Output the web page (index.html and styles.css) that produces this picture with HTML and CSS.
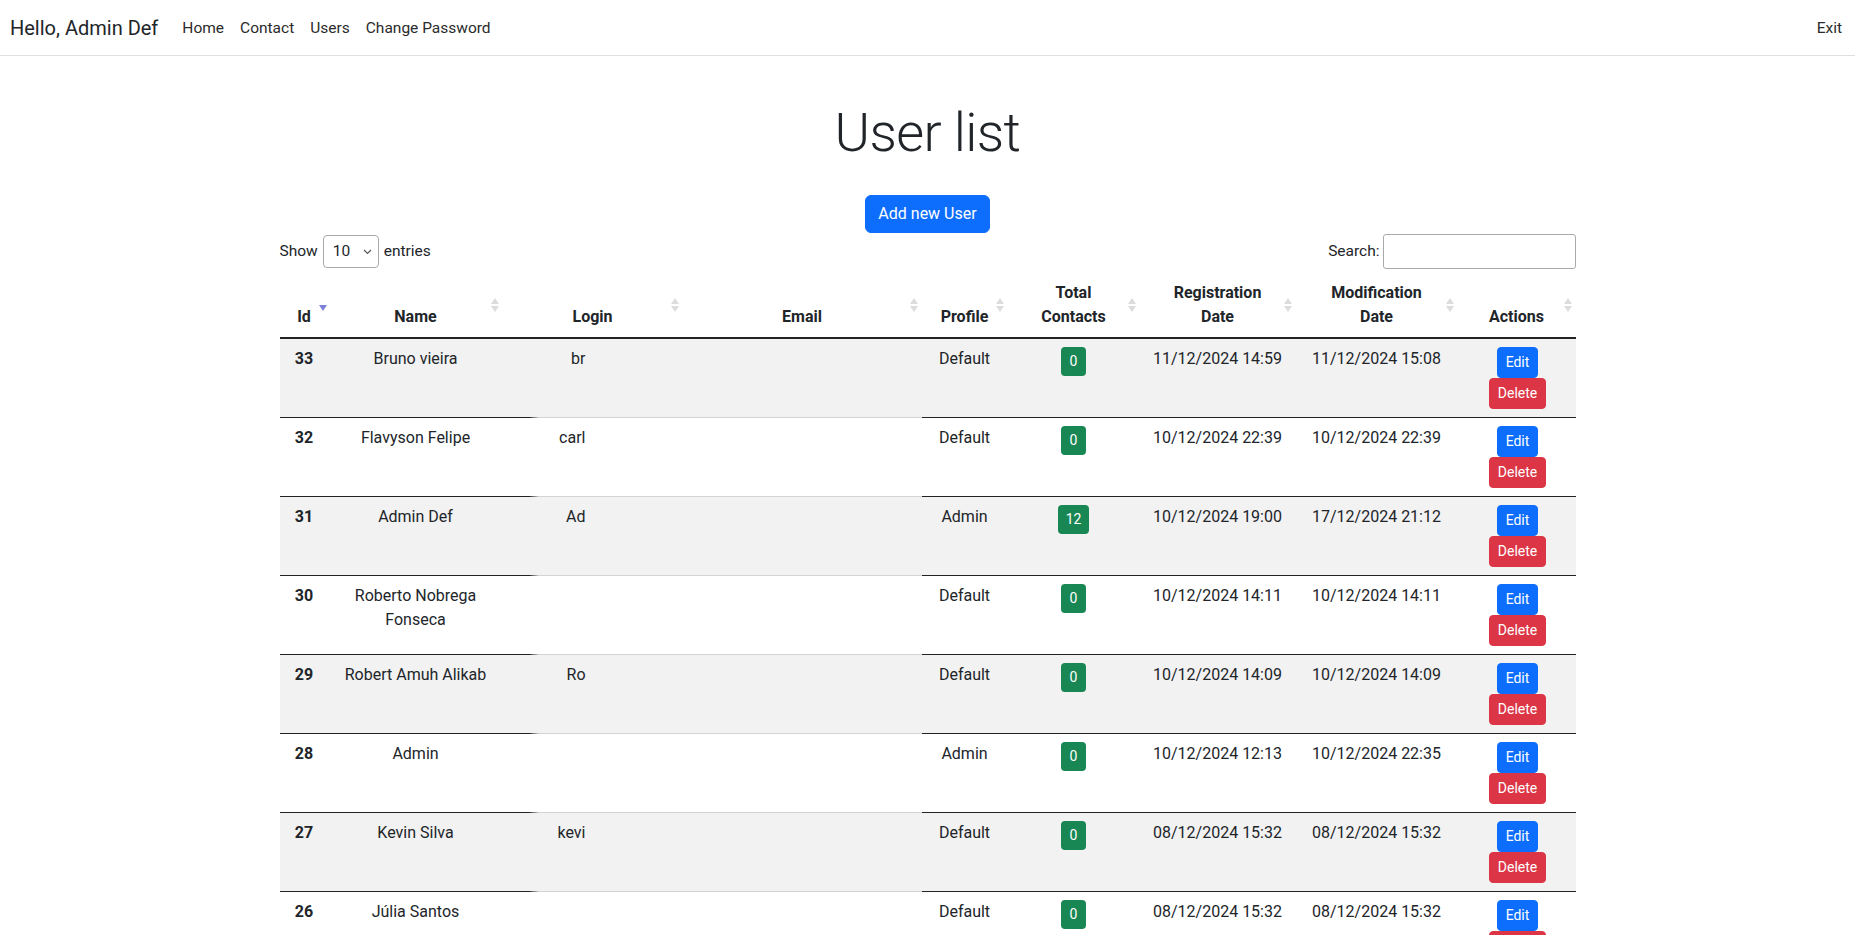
FILE: index.html
```html
<!DOCTYPE html>
<html lang="en">
<head>
<meta charset="utf-8">
<title>User list</title>
<link rel="stylesheet" href="styles.css">
</head>
<body>
<nav class="navbar">
  <div class="nav-left">
    <a class="brand" href="#">Hello, Admin Def</a>
    <ul class="nav-links">
      <li><a class="nav-link" href="#">Home</a></li>
      <li><a class="nav-link" href="#">Contact</a></li>
      <li><a class="nav-link" href="#">Users</a></li>
      <li><a class="nav-link" href="#">Change Password</a></li>
    </ul>
  </div>
  <a class="nav-link" href="#">Exit</a>
</nav>

<main class="container">
  <h1 class="title">User list</h1>
  <div class="add-wrap"><a class="btn btn-primary" href="#">Add new User</a></div>

  <div class="dt-top">
    <div class="dt-length">Show
      <span class="fake-select">10
        <svg class="chev" width="9" height="6" viewBox="0 0 9 6"><path d="M1 1 L4.5 4.5 L8 1" fill="none" stroke="#555" stroke-width="1.2"/></svg>
      </span>
      entries</div>
    <div class="dt-search">Search:<span class="fake-input"></span></div>
  </div>

  <table class="users">
    <colgroup>
      <col class="c-id"><col class="c-name"><col class="c-login"><col class="c-email"><col class="c-profile"><col class="c-total"><col class="c-reg"><col class="c-mod"><col class="c-actions">
    </colgroup>
    <thead>
      <tr>
        <th class="sort-desc">Id</th>
        <th class="sort">Name</th>
        <th class="sort">Login</th>
        <th class="sort">Email</th>
        <th class="sort">Profile</th>
        <th class="sort">Total<br>Contacts</th>
        <th class="sort">Registration<br>Date</th>
        <th class="sort">Modification<br>Date</th>
        <th class="sort">Actions</th>
      </tr>
    </thead>
    <tbody>
      <tr class="odd">
        <td class="id">33</td><td>Bruno vieira</td><td class="login">br</td><td class="email"></td><td>Default</td>
        <td><span class="count">0</span></td><td>11/12/2024 14:59</td><td>11/12/2024 15:08</td>
        <td><div class="actions"><a class="btn-sm btn-edit" href="#">Edit</a><a class="btn-sm btn-del" href="#">Delete</a></div></td>
      </tr>
      <tr>
        <td class="id">32</td><td>Flavyson Felipe</td><td class="login">carl</td><td class="email"></td><td>Default</td>
        <td><span class="count">0</span></td><td>10/12/2024 22:39</td><td>10/12/2024 22:39</td>
        <td><div class="actions"><a class="btn-sm btn-edit" href="#">Edit</a><a class="btn-sm btn-del" href="#">Delete</a></div></td>
      </tr>
      <tr class="odd">
        <td class="id">31</td><td>Admin Def</td><td class="login">Ad</td><td class="email"></td><td>Admin</td>
        <td><span class="count">12</span></td><td>10/12/2024 19:00</td><td>17/12/2024 21:12</td>
        <td><div class="actions"><a class="btn-sm btn-edit" href="#">Edit</a><a class="btn-sm btn-del" href="#">Delete</a></div></td>
      </tr>
      <tr>
        <td class="id">30</td><td>Roberto Nobrega<br>Fonseca</td><td class="login"></td><td class="email"></td><td>Default</td>
        <td><span class="count">0</span></td><td>10/12/2024 14:11</td><td>10/12/2024 14:11</td>
        <td><div class="actions"><a class="btn-sm btn-edit" href="#">Edit</a><a class="btn-sm btn-del" href="#">Delete</a></div></td>
      </tr>
      <tr class="odd">
        <td class="id">29</td><td>Robert Amuh Alikab</td><td class="login">Ro</td><td class="email"></td><td>Default</td>
        <td><span class="count">0</span></td><td>10/12/2024 14:09</td><td>10/12/2024 14:09</td>
        <td><div class="actions"><a class="btn-sm btn-edit" href="#">Edit</a><a class="btn-sm btn-del" href="#">Delete</a></div></td>
      </tr>
      <tr>
        <td class="id">28</td><td>Admin</td><td class="login"></td><td class="email"></td><td>Admin</td>
        <td><span class="count">0</span></td><td>10/12/2024 12:13</td><td>10/12/2024 22:35</td>
        <td><div class="actions"><a class="btn-sm btn-edit" href="#">Edit</a><a class="btn-sm btn-del" href="#">Delete</a></div></td>
      </tr>
      <tr class="odd">
        <td class="id">27</td><td>Kevin Silva</td><td class="login">kevi</td><td class="email"></td><td>Default</td>
        <td><span class="count">0</span></td><td>08/12/2024 15:32</td><td>08/12/2024 15:32</td>
        <td><div class="actions"><a class="btn-sm btn-edit" href="#">Edit</a><a class="btn-sm btn-del" href="#">Delete</a></div></td>
      </tr>
      <tr>
        <td class="id">26</td><td>Júlia Santos</td><td class="login"></td><td class="email"></td><td>Default</td>
        <td><span class="count">0</span></td><td>08/12/2024 15:32</td><td>08/12/2024 15:32</td>
        <td><div class="actions"><a class="btn-sm btn-edit" href="#">Edit</a><a class="btn-sm btn-del" href="#">Delete</a></div></td>
      </tr>
    </tbody>
  </table>
</main>
</body>
</html>
```

FILE: styles.css
```css
* { box-sizing: border-box; }
html, body { margin: 0; padding: 0; }
body {
  font-family: "Segoe UI", Roboto, "Liberation Sans", sans-serif;
  font-size: 16px;
  line-height: 1.5;
  color: #212529;
  background: #fff;
}
a { text-decoration: none; }

/* navbar */
.navbar {
  display: flex;
  align-items: center;
  justify-content: space-between;
  height: 56px;
  padding: 0 5px 0 10px;
  border-bottom: 1px solid #dfdfdf;
}
.nav-left { display: flex; align-items: center; }
.brand {
  font-size: 20px;
  line-height: 30px;
  color: #212529;
  margin-right: 16px;
}
.nav-links { list-style: none; display: flex; margin: 0; padding: 0; }
.nav-link {
  display: block;
  padding: 8px;
  font-size: 15.5px;
  line-height: 24px;
  color: #2b2b2b;
}

/* container */
.container {
  width: 1296px;
  margin: 0 auto;
}
.title {
  margin: 43px 0 0;
  text-align: center;
  font-size: 54px;
  font-weight: 300;
  line-height: 67px;
  letter-spacing: -0.6px;
}
.add-wrap { display: flex; justify-content: center; margin-top: 29px; }
.btn {
  display: inline-block;
  padding: 6px 12px;
  font-size: 16px;
  line-height: 24px;
  border: 1px solid transparent;
  border-radius: 6px;
}
.btn-primary { background: #0d6efd; border-color: #0d6efd; color: #fff; }

.dt-top {
  display: flex;
  justify-content: space-between;
  align-items: center;
  height: 37px;
  font-size: 15.5px;
}
.dt-length { display: flex; align-items: center; gap: 5px; }
.fake-select {
  display: inline-flex;
  align-items: center;
  justify-content: space-between;
  width: 56px;
  height: 33px;
  padding: 0 6px 0 9px;
  border: 1px solid #aaa;
  border-radius: 4px;
  font-size: 15.5px;
}
.dt-search { display: flex; align-items: center; }
.fake-input {
  display: inline-block;
  width: 193px;
  height: 35px;
  margin-left: 3px;
  border: 1px solid #aaa;
  border-radius: 3px;
}

/* table */
.users {
  width: 1296px;
  table-layout: fixed;
  border-collapse: collapse;
  margin-top: 3px;
}
.c-id { width: 49px; }
.c-name { width: 174px; }
.c-login { width: 180px; }
.c-email { width: 239px; }
.c-profile { width: 86px; }
.c-total { width: 132px; }
.c-reg { width: 156px; }
.c-mod { width: 162px; }
.c-actions { width: 118px; }

.users th {
  position: relative;
  padding: 8px;
  font-weight: 700;
  text-align: center;
  vertical-align: bottom;
  border-bottom: 2px solid #222;
}
.users th.sort::before,
.users th.sort::after,
.users th.sort-desc::after {
  content: "";
  position: absolute;
  right: 4px;
  width: 0;
  height: 0;
  border-left: 4px solid transparent;
  border-right: 4px solid transparent;
}
.users th.sort::before {
  top: 25px;
  border-bottom: 6px solid #dcdcdc;
}
.users th.sort::after {
  top: 33px;
  border-top: 6px solid #dcdcdc;
}
.users th.sort-desc::after {
  top: 32px;
  right: 2px;
  border-top: 6px solid #7c82d8;
}

.users td {
  padding: 8px;
  text-align: center;
  vertical-align: top;
  border-bottom: 1px solid #222;
}
.users tr.odd td { background: #f2f2f2; }
.users td.id { font-weight: 700; }
.users td.login {
  position: relative;
  text-align: right;
  padding-right: 97px;
  border-bottom: 1px solid #d4d4d4;
}
.users td.login::after {
  content: "";
  position: absolute;
  left: 0;
  bottom: -1px;
  width: 36px;
  height: 1px;
  background: linear-gradient(to right, #222 0, #222 26px, #d4d4d4 36px);
}
.users td.email { border-bottom: 1px solid #d4d4d4; }

.count {
  display: inline-block;
  min-width: 25px;
  padding: 4px 8px;
  font-size: 14px;
  line-height: 21px;
  border-radius: 4px;
  background: #198754;
  color: #fff;
}
.actions { display: flex; flex-direction: column; align-items: center; padding-left: 2px; }
.btn-sm {
  display: inline-block;
  padding: 4px 8px;
  font-size: 14px;
  line-height: 21px;
  border: 1px solid transparent;
  border-radius: 4px;
  color: #fff;
}
.btn-edit { background: #0d6efd; border-color: #0d6efd; }
.btn-del { background: #dc3545; border-color: #dc3545; }
```
